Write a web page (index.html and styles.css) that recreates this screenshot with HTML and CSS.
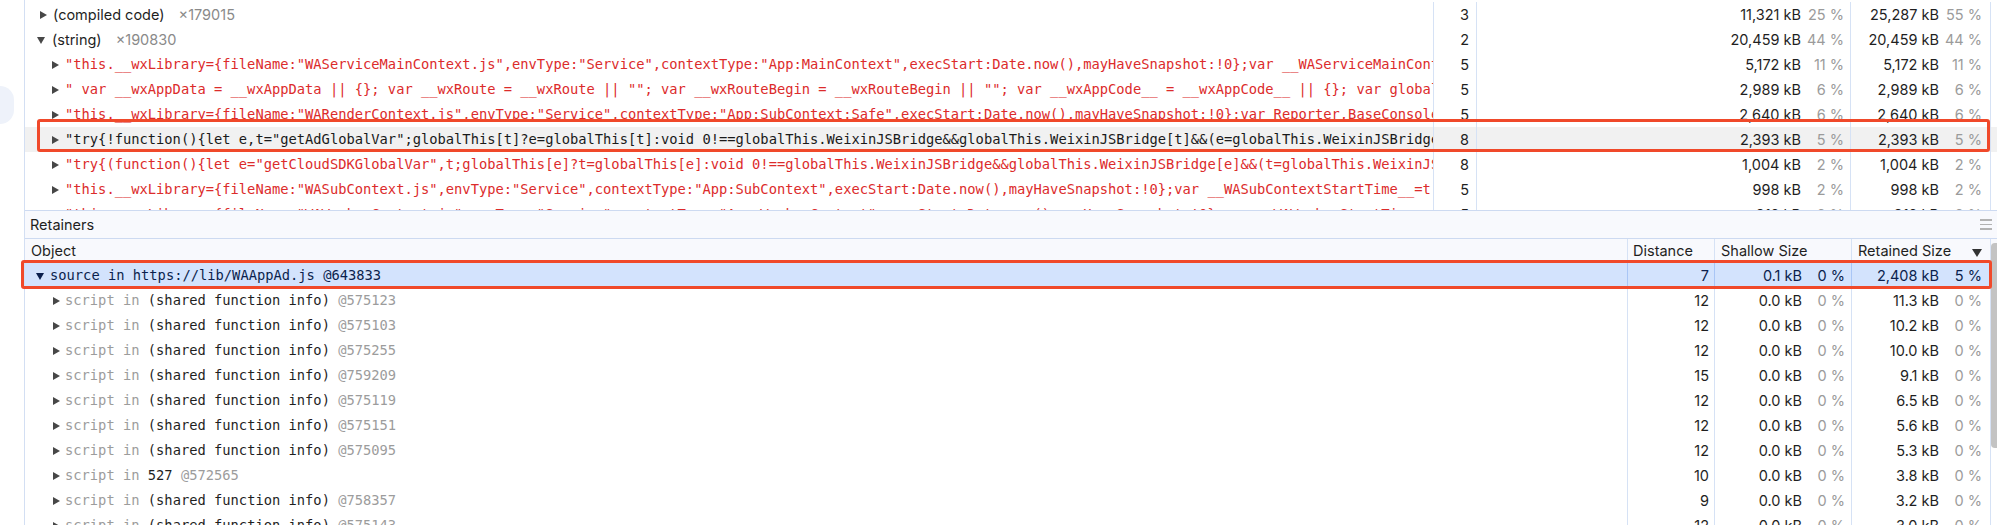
FILE: index.html
```html
<!DOCTYPE html>
<html lang="en">
<head>
    <meta charset="UTF-8">
    <meta name="viewport" content="width=device-width, initial-scale=1.0">
    <title>Heap Snapshot</title>
    <link rel="stylesheet" href="styles.css">
</head>
<body>

    <div class="page">
        <div class="sidebar"><div class="blob"></div></div>

        <div class="main">
            <!-- Summary grid -->
            <div class="summary">
                <div class="row">
                    <div class="obj lvl0"><span class="tri"></span><span class="ui">(compiled code)</span><span class="count">×179015</span></div>
                    <div class="dist">3</div>
                    <div class="size"><span class="val">11,321 kB</span><span class="pct">25 %</span></div>
                    <div class="size ret"><span class="val">25,287 kB</span><span class="pct">55 %</span></div>
                    <div class="rest"></div>
                </div>
                <div class="row">
                    <div class="obj lvl0-open"><span class="tri open"></span><span class="ui">(string)</span><span class="count">×190830</span></div>
                    <div class="dist">2</div>
                    <div class="size"><span class="val">20,459 kB</span><span class="pct">44 %</span></div>
                    <div class="size ret"><span class="val">20,459 kB</span><span class="pct">44 %</span></div>
                    <div class="rest"></div>
                </div>
                <div class="row">
                    <div class="obj lvl1"><span class="tri"></span><span class="str">"this.__wxLibrary={fileName:"WAServiceMainContext.js",envType:"Service",contextType:"App:MainContext",execStart:Date.now(),mayHaveSnapshot:!0};var __WAServiceMainContextStartTime__=Date.now();</span></div>
                    <div class="dist">5</div>
                    <div class="size"><span class="val">5,172 kB</span><span class="pct">11 %</span></div>
                    <div class="size ret"><span class="val">5,172 kB</span><span class="pct">11 %</span></div>
                    <div class="rest"></div>
                </div>
                <div class="row">
                    <div class="obj lvl1"><span class="tri"></span><span class="str">" var __wxAppData = __wxAppData || {}; var __wxRoute = __wxRoute || ""; var __wxRouteBegin = __wxRouteBegin || ""; var __wxAppCode__ = __wxAppCode__ || {}; var global = global || {};</span></div>
                    <div class="dist">5</div>
                    <div class="size"><span class="val">2,989 kB</span><span class="pct">6 %</span></div>
                    <div class="size ret"><span class="val">2,989 kB</span><span class="pct">6 %</span></div>
                    <div class="rest"></div>
                </div>
                <div class="row">
                    <div class="obj lvl1"><span class="tri"></span><span class="str">"this.__wxLibrary={fileName:"WARenderContext.js",envType:"Service",contextType:"App:SubContext:Safe",execStart:Date.now(),mayHaveSnapshot:!0};var Reporter,BaseConsole,Protect;</span></div>
                    <div class="dist">5</div>
                    <div class="size"><span class="val">2,640 kB</span><span class="pct">6 %</span></div>
                    <div class="size ret"><span class="val">2,640 kB</span><span class="pct">6 %</span></div>
                    <div class="rest"></div>
                </div>
                <div class="row picked">
                    <div class="obj lvl1"><span class="tri"></span><span class="str">"try{!function(){let e,t="getAdGlobalVar";globalThis[t]?e=globalThis[t]:void 0!==globalThis.WeixinJSBridge&&globalThis.WeixinJSBridge[t]&&(e=globalThis.WeixinJSBridge[t]())</span></div>
                    <div class="dist">8</div>
                    <div class="size"><span class="val">2,393 kB</span><span class="pct">5 %</span></div>
                    <div class="size ret"><span class="val">2,393 kB</span><span class="pct">5 %</span></div>
                    <div class="rest"></div>
                </div>
                <div class="row">
                    <div class="obj lvl1"><span class="tri"></span><span class="str">"try{(function(){let e="getCloudSDKGlobalVar",t;globalThis[e]?t=globalThis[e]:void 0!==globalThis.WeixinJSBridge&&globalThis.WeixinJSBridge[e]&&(t=globalThis.WeixinJSBridge[e]())</span></div>
                    <div class="dist">8</div>
                    <div class="size"><span class="val">1,004 kB</span><span class="pct">2 %</span></div>
                    <div class="size ret"><span class="val">1,004 kB</span><span class="pct">2 %</span></div>
                    <div class="rest"></div>
                </div>
                <div class="row">
                    <div class="obj lvl1"><span class="tri"></span><span class="str">"this.__wxLibrary={fileName:"WASubContext.js",envType:"Service",contextType:"App:SubContext",execStart:Date.now(),mayHaveSnapshot:!0};var __WASubContextStartTime__=t</span></div>
                    <div class="dist">5</div>
                    <div class="size"><span class="val">998 kB</span><span class="pct">2 %</span></div>
                    <div class="size ret"><span class="val">998 kB</span><span class="pct">2 %</span></div>
                    <div class="rest"></div>
                </div>
                <div class="row">
                    <div class="obj lvl1"><span class="tri"></span><span class="str">"this.__wxLibrary={fileName:"WAWorkerContext.js",envType:"Service",contextType:"App:WorkerContext",execStart:Date.now(),mayHaveSnapshot:!0};var __WAWorkerStartTime__=t</span></div>
                    <div class="dist">5</div>
                    <div class="size"><span class="val">912 kB</span><span class="pct">2 %</span></div>
                    <div class="size ret"><span class="val">912 kB</span><span class="pct">2 %</span></div>
                    <div class="rest"></div>
                </div>
            </div>

            <!-- Retainers -->
            <div class="retainers-bar">
                <span class="ui">Retainers</span>
                <span class="menu"><i></i><i></i><i></i></span>
            </div>

            <div class="retainers">
                <div class="rrow head">
                    <div class="obj"><span class="ui">Object</span></div>
                    <div class="dist">Distance</div>
                    <div class="size">Shallow Size</div>
                    <div class="size">Retained Size<span class="sort"></span></div>
                    <div class="rest"></div>
                </div>
                <div class="rrow chosen">
                    <div class="obj rlvl0"><span class="tri open"></span><span class="mono">source in https://lib/WAAppAd.js @643833</span></div>
                    <div class="dist">7</div>
                    <div class="size"><span class="val">0.1 kB</span><span class="pct">0 %</span></div>
                    <div class="size"><span class="val">2,408 kB</span><span class="pct">5 %</span></div>
                    <div class="rest"></div>
                </div>
                <div class="rrow">
                    <div class="obj rlvl1"><span class="tri"></span><span class="mono"><span class="edge">script in</span> (shared function info) <span class="id">@575123</span></span></div>
                    <div class="dist">12</div>
                    <div class="size"><span class="val">0.0 kB</span><span class="pct">0 %</span></div>
                    <div class="size"><span class="val">11.3 kB</span><span class="pct">0 %</span></div>
                    <div class="rest"></div>
                </div>
                <div class="rrow">
                    <div class="obj rlvl1"><span class="tri"></span><span class="mono"><span class="edge">script in</span> (shared function info) <span class="id">@575103</span></span></div>
                    <div class="dist">12</div>
                    <div class="size"><span class="val">0.0 kB</span><span class="pct">0 %</span></div>
                    <div class="size"><span class="val">10.2 kB</span><span class="pct">0 %</span></div>
                    <div class="rest"></div>
                </div>
                <div class="rrow">
                    <div class="obj rlvl1"><span class="tri"></span><span class="mono"><span class="edge">script in</span> (shared function info) <span class="id">@575255</span></span></div>
                    <div class="dist">12</div>
                    <div class="size"><span class="val">0.0 kB</span><span class="pct">0 %</span></div>
                    <div class="size"><span class="val">10.0 kB</span><span class="pct">0 %</span></div>
                    <div class="rest"></div>
                </div>
                <div class="rrow">
                    <div class="obj rlvl1"><span class="tri"></span><span class="mono"><span class="edge">script in</span> (shared function info) <span class="id">@759209</span></span></div>
                    <div class="dist">15</div>
                    <div class="size"><span class="val">0.0 kB</span><span class="pct">0 %</span></div>
                    <div class="size"><span class="val">9.1 kB</span><span class="pct">0 %</span></div>
                    <div class="rest"></div>
                </div>
                <div class="rrow">
                    <div class="obj rlvl1"><span class="tri"></span><span class="mono"><span class="edge">script in</span> (shared function info) <span class="id">@575119</span></span></div>
                    <div class="dist">12</div>
                    <div class="size"><span class="val">0.0 kB</span><span class="pct">0 %</span></div>
                    <div class="size"><span class="val">6.5 kB</span><span class="pct">0 %</span></div>
                    <div class="rest"></div>
                </div>
                <div class="rrow">
                    <div class="obj rlvl1"><span class="tri"></span><span class="mono"><span class="edge">script in</span> (shared function info) <span class="id">@575151</span></span></div>
                    <div class="dist">12</div>
                    <div class="size"><span class="val">0.0 kB</span><span class="pct">0 %</span></div>
                    <div class="size"><span class="val">5.6 kB</span><span class="pct">0 %</span></div>
                    <div class="rest"></div>
                </div>
                <div class="rrow">
                    <div class="obj rlvl1"><span class="tri"></span><span class="mono"><span class="edge">script in</span> (shared function info) <span class="id">@575095</span></span></div>
                    <div class="dist">12</div>
                    <div class="size"><span class="val">0.0 kB</span><span class="pct">0 %</span></div>
                    <div class="size"><span class="val">5.3 kB</span><span class="pct">0 %</span></div>
                    <div class="rest"></div>
                </div>
                <div class="rrow">
                    <div class="obj rlvl1"><span class="tri"></span><span class="mono"><span class="edge">script in</span> 527 <span class="id">@572565</span></span></div>
                    <div class="dist">10</div>
                    <div class="size"><span class="val">0.0 kB</span><span class="pct">0 %</span></div>
                    <div class="size"><span class="val">3.8 kB</span><span class="pct">0 %</span></div>
                    <div class="rest"></div>
                </div>
                <div class="rrow">
                    <div class="obj rlvl1"><span class="tri"></span><span class="mono"><span class="edge">script in</span> (shared function info) <span class="id">@758357</span></span></div>
                    <div class="dist">9</div>
                    <div class="size"><span class="val">0.0 kB</span><span class="pct">0 %</span></div>
                    <div class="size"><span class="val">3.2 kB</span><span class="pct">0 %</span></div>
                    <div class="rest"></div>
                </div>
                <div class="rrow">
                    <div class="obj rlvl1"><span class="tri"></span><span class="mono"><span class="edge">script in</span> (shared function info) <span class="id">@575143</span></span></div>
                    <div class="dist">12</div>
                    <div class="size"><span class="val">0.0 kB</span><span class="pct">0 %</span></div>
                    <div class="size"><span class="val">3.0 kB</span><span class="pct">0 %</span></div>
                    <div class="rest"></div>
                </div>

                <div class="thumb"></div>
            </div>
        </div>

        <!-- annotation boxes drawn over the grids -->
        <div class="mark mark-top"></div>
        <div class="mark mark-bottom"></div>
    </div>

</body>
</html>
```

FILE: styles.css
```css
body {
    margin: 0;
    background: #fff;
    font-family: Inter, "Liberation Sans", Arial, sans-serif;
    font-size: 14.5px;
    color: #1f1f1f;
    overflow: hidden;
}
.page {
    position: relative;
    display: flex;
    width: 1997px;
    height: 525px;
    overflow: hidden;
}
.sidebar {
    width: 24px;
    border-right: 1px solid #d3dff3;
    flex-shrink: 0;
}
.blob {
    margin-top: 86px;
    width: 14px;
    height: 38px;
    background: #eef2fa;
    border-radius: 0 14px 14px 0;
}
.main {
    flex: 1;
    display: flex;
    flex-direction: column;
    min-width: 0;
}

/* summary grid */
.summary {
    height: 208px;
    padding-top: 2px;
    overflow: hidden;
    border-bottom: 1px solid #cddaf1;
}
.row, .rrow {
    display: grid;
    height: 25px;
    line-height: 25px;
}
.row {
    grid-template-columns: 1408px 43px 374px 140px 1fr;
}
.rrow {
    grid-template-columns: 1602px 87px 137px 139px 1fr;
}
.row.picked {
    background: #f1f1f1;
}
.obj {
    overflow: hidden;
    white-space: pre;
    display: flex;
    align-items: center;
}
.dist, .size, .rest {
    border-left: 1px solid #d6e2f5;
}
.dist {
    text-align: right;
    padding-right: 7px;
}
.rrow .dist {
    padding-right: 5px;
}
.size {
    display: flex;
    justify-content: flex-end;
    padding-right: 6px;
}
.size.ret, .rrow .size + .size {
    padding-right: 8px;
}
.pct {
    width: 43px;
    text-align: right;
    color: #9b9b9b;
}

/* tree triangles */
.tri {
    display: inline-block;
    flex-shrink: 0;
    width: 0;
    height: 0;
    border-top: 4px solid transparent;
    border-bottom: 4px solid transparent;
    border-left: 7px solid #474747;
    margin-right: 6px;
}
.tri.open {
    border-left: 4.5px solid transparent;
    border-right: 4.5px solid transparent;
    border-top: 7px solid #474747;
    border-bottom: 0;
    margin-right: 7px;
    margin-top: 2px;
}
.lvl0 { padding-left: 15px; }
.lvl0-open { padding-left: 12px; }
.lvl1 { padding-left: 27px; }
.rlvl0 { padding-left: 11px; }
.rlvl0 .tri.open { margin-right: 6px; }
.rlvl1 { padding-left: 28px; }
.rlvl1 .tri { margin-right: 5px; }

.count {
    margin-left: 14px;
    color: #8a8a8a;
}
.str, .mono {
    font-family: "DejaVu Sans Mono", "Liberation Mono", monospace;
    font-size: 13.75px;
}
.str {
    color: #dc2b2b;
}
.picked .str {
    color: #1a1a1a;
}
.edge, .id {
    color: #9c9c9c;
}

/* retainers pane */
.retainers-bar {
    height: 27px;
    line-height: 27px;
    padding-left: 5px;
    background: #f8f9fd;
    border-bottom: 1px solid #cddaf1;
    display: flex;
    justify-content: space-between;
}
.menu {
    display: flex;
    flex-direction: column;
    justify-content: center;
    gap: 3px;
    width: 12px;
    margin-right: 5px;
}
.menu i {
    display: block;
    height: 1.5px;
    background: #b3b3b3;
}
.retainers {
    position: relative;
    flex: 1;
    overflow: hidden;
}
.rrow.head {
    background: #f8f9fd;
    height: 24px;
    line-height: 24px;
}
.head .obj { padding-left: 6px; }
.head .dist {
    text-align: left;
    padding-left: 5px;
}
.head .size {
    justify-content: flex-start;
    padding-left: 6px;
}
.sort {
    margin-left: auto;
    margin-top: 10px;
    width: 0;
    height: 0;
    border-left: 5px solid transparent;
    border-right: 5px solid transparent;
    border-top: 8px solid #333;
}
.head .size + .size {
    padding-right: 8px;
}
.rrow.chosen {
    background: #d3e3fd;
    color: #0b1f4d;
}
.rrow.chosen .dist, .rrow.chosen .size {
    border-left-color: #a9c6f6;
}
.rrow.chosen .pct {
    color: #0b1f4d;
}
.rrow.chosen .tri.open {
    border-top-color: #0b1f4d;
}
.thumb {
    position: absolute;
    right: 0;
    top: 4px;
    width: 6px;
    height: 205px;
    background: #c3c3c3;
    border-radius: 4px 0 0 4px;
}

/* red annotation boxes */
.mark {
    position: absolute;
    border: 3px solid #f0492a;
    border-radius: 3px;
    box-sizing: border-box;
}
.mark-top {
    left: 37px;
    top: 119px;
    width: 1953px;
    height: 33px;
}
.mark-bottom {
    left: 21px;
    top: 260px;
    width: 1971px;
    height: 29px;
}
```
